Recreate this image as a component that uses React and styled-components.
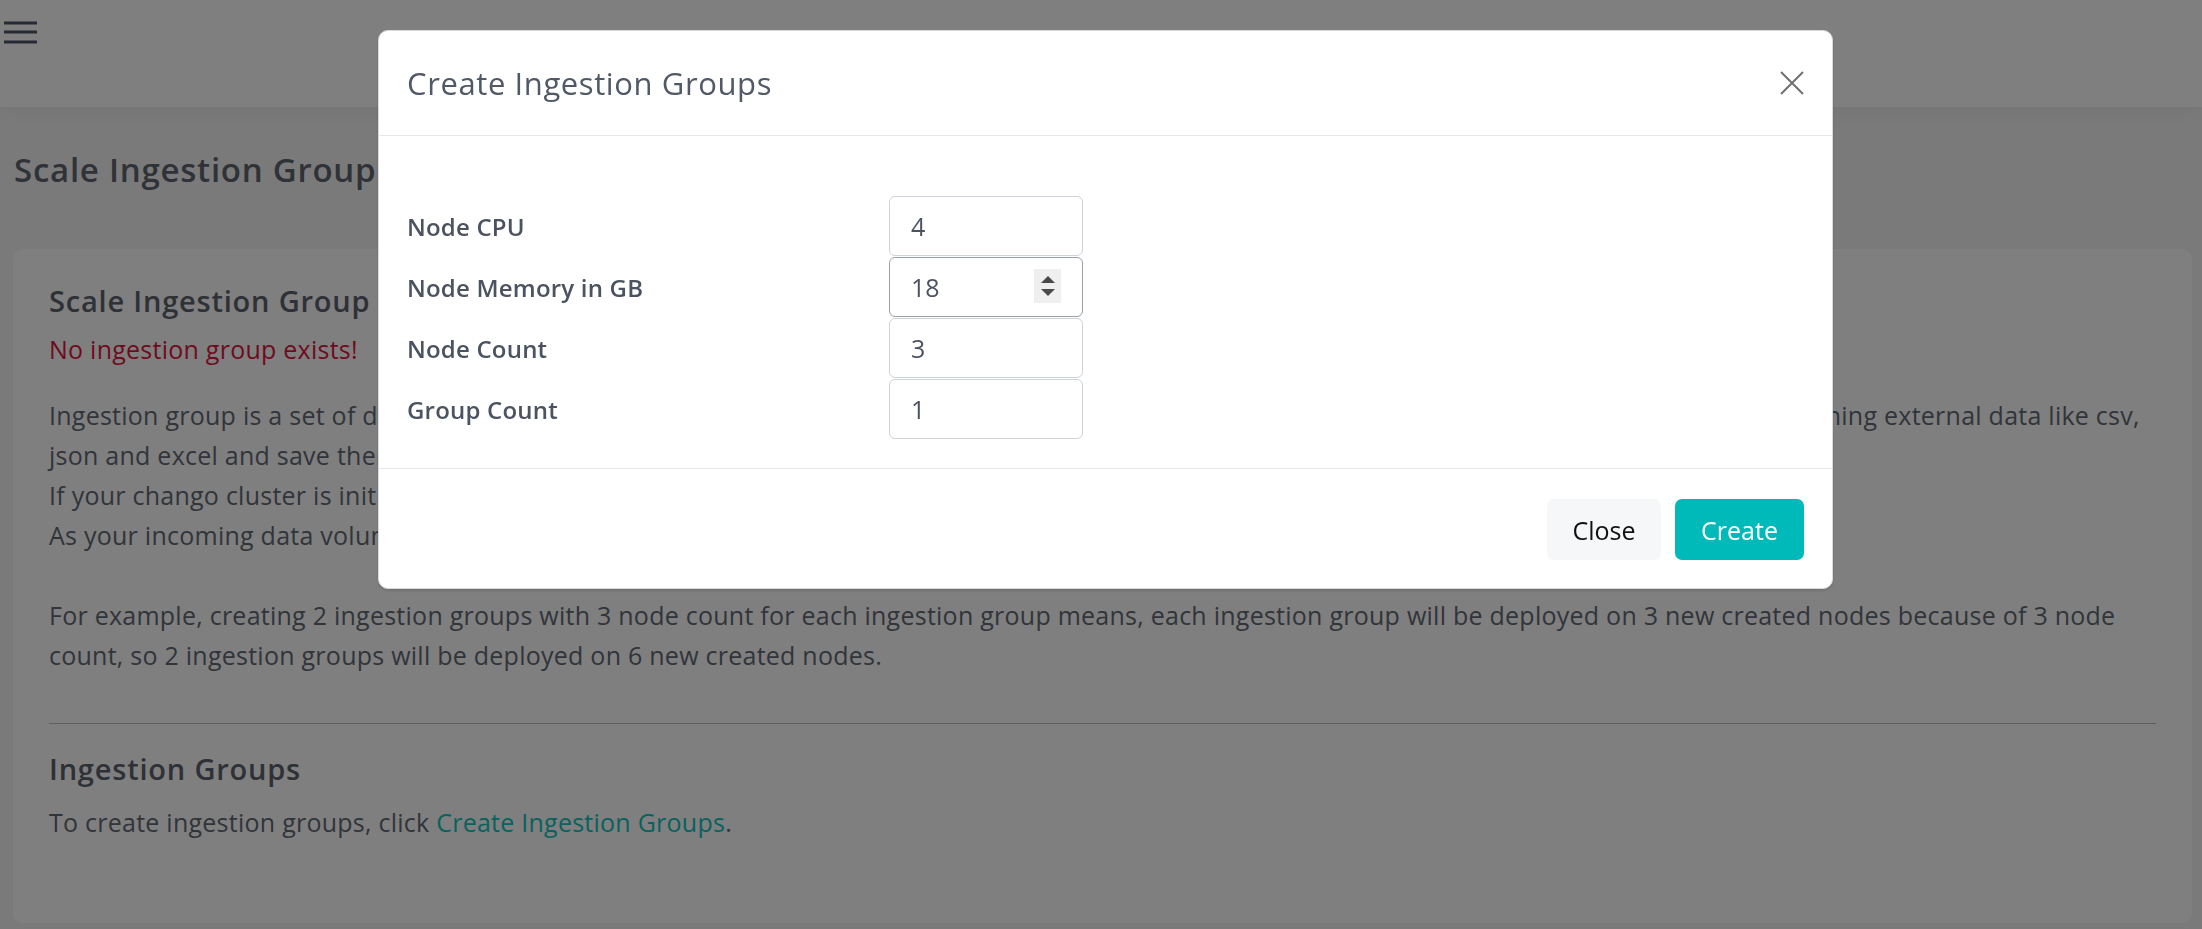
import React from 'react';
import styled, { createGlobalStyle } from 'styled-components';

const GlobalStyle = createGlobalStyle`
  html, body {
    margin: 0;
    padding: 0;
  }
  body {
    font-family: "Open Sans", "Liberation Sans", sans-serif;
    font-size: 25px;
    letter-spacing: 0.25px;
    color: #636a75;
    background: #f4f4f4;
    overflow: hidden;
  }
  * {
    box-sizing: border-box;
  }
`;

const Page = styled.div`
  min-height: 929px;
  background: #f4f4f4;
`;

const TopBar = styled.header`
  height: 107px;
  background: #ffffff;
  box-shadow: 0 4px 16px rgba(0, 0, 0, 0.04);
  padding: 20px 0 0 4px;
`;

const MenuButton = styled.button`
  border: 0;
  padding: 0;
  background: transparent;
  display: flex;
  width: 34px;
  height: 24px;
  color: #4d5566;
`;

const Main = styled.main`
  padding: 43px 10px 0 13px;
`;

const PageTitle = styled.h4`
  margin: 0 0 59px 1px;
  font-size: 33px;
  letter-spacing: 0.75px;
  line-height: 1.2;
  font-weight: 600;
  color: #5e646e;
`;

const Card = styled.section`
  background: #ffffff;
  border-radius: 10px;
  padding: 35px 36px 81px;
`;

const CardTitle = styled.h5`
  margin: 0 0 ${(p) => p.$gap}px;
  font-size: 29px;
  letter-spacing: 0.8px;
  line-height: 1.2;
  font-weight: 600;
  color: #5c626c;
`;

const Text = styled.p`
  margin: 0 0 ${(p) => p.$gap || 0}px;
  line-height: 40px;
  color: ${(p) => (p.$danger ? '#e0173f' : '#636a75')};
`;

const Line = styled.span`
  white-space: nowrap;
`;

const Divider = styled.hr`
  margin: 48px 0 28px;
  border: 0;
  border-top: 1px solid #bdbdbd;
`;

const Link = styled.a`
  color: #10c4bc;
  text-decoration: none;
`;

const Backdrop = styled.div`
  position: fixed;
  inset: 0;
  background: rgba(0, 0, 0, 0.5);
  display: flex;
  align-items: flex-start;
  padding: 30px 0 0 378px;
`;

const Dialog = styled.div`
  width: 1455px;
  background: #ffffff;
  border: 1px solid #d6d9de;
  border-radius: 10px;
  box-shadow: 0 2px 3px rgba(0, 0, 0, 0.12);
  display: flex;
  flex-direction: column;
  color: #4b5360;
  letter-spacing: 0;
`;

const DialogHeader = styled.div`
  height: 105px;
  border-bottom: 1px solid #e6e8eb;
  display: flex;
  align-items: center;
  justify-content: space-between;
  padding: 0 28px;
`;

const DialogTitle = styled.h5`
  margin: 0;
  font-size: 31px;
  letter-spacing: 0.6px;
  font-weight: 500;
  color: #515966;
`;

const CloseIcon = styled.button`
  border: 0;
  padding: 0;
  background: transparent;
  width: 24px;
  height: 24px;
  display: flex;
  color: #707070;
`;

const DialogBody = styled.div`
  padding: 60px 28px 29px;
  border-bottom: 1px solid #e6e8eb;
`;

const FormGrid = styled.div`
  display: grid;
  grid-template-columns: 482px 194px;
  grid-auto-rows: 60px;
  row-gap: 1px;
  align-items: center;
`;

const Label = styled.label`
  font-size: 24px;
  letter-spacing: 0.2px;
  font-weight: 600;
  color: #4b5360;
`;

const Field = styled.div`
  position: relative;
  height: 60px;
`;

const Input = styled.input`
  width: 100%;
  height: 60px;
  border: 1px solid ${(p) => (p.$active ? '#9aa0a7' : '#ced3d9')};
  border-radius: 6px;
  padding: 0 21px;
  font-family: inherit;
  font-size: 25px;
  color: #4b5360;
  background: #ffffff;
  outline: none;
`;

const Spinner = styled.span`
  position: absolute;
  right: 22px;
  top: 12px;
  width: 27px;
  height: 34px;
  background: #efefef;
  display: flex;
  flex-direction: column;
  align-items: center;
  justify-content: center;
  gap: 6px;
`;

const DialogFooter = styled.div`
  display: flex;
  justify-content: flex-end;
  gap: 14px;
  padding: 30px 28px 28px;
`;

const Button = styled.button`
  height: 61px;
  min-width: ${(p) => p.$w}px;
  border: 0;
  border-radius: 7px;
  padding: 0 24px;
  font-family: inherit;
  font-size: 25px;
  background: ${(p) => (p.$primary ? '#00b9b9' : '#f6f7f9')};
  color: ${(p) => (p.$primary ? '#ffffff' : '#111111')};
`;

const fields = [
  { label: 'Node CPU', value: '4' },
  { label: 'Node Memory in GB', value: '18', active: true },
  { label: 'Node Count', value: '3' },
  { label: 'Group Count', value: '1' },
];

export default function App() {
  return (
    <>
      <GlobalStyle />
      <Page>
        <TopBar>
          <MenuButton aria-label="menu">
            <svg width="34" height="24" viewBox="0 0 34 24">
              <rect x="0" y="1.5" width="33" height="3" fill="currentColor" />
              <rect x="0" y="10.5" width="33" height="3" fill="currentColor" />
              <rect x="0" y="20.5" width="33" height="3" fill="currentColor" />
            </svg>
          </MenuButton>
        </TopBar>
        <Main>
          <PageTitle>Scale Ingestion Group</PageTitle>
          <Card>
            <CardTitle $gap={11}>Scale Ingestion Group</CardTitle>
            <Text $danger $gap={26}>No ingestion group exists!</Text>
            <Text>
              <Line>
                Ingestion group is a set of data ingestion services like chango data api and chango streaming which are responsible for receiving stream data and cleaning external data like csv,
              </Line>
              <br />
              json and excel and save them into chango iceberg tables.
              <br />
              If your chango cluster is initially created, there is no ingestion group in your cluster.
              <br />
              As your incoming data volume increases, you can add more ingestion groups.
              <br />
              <br />
              For example, creating 2 ingestion groups with 3 node count for each ingestion group means, each ingestion group will be deployed on 3 new created nodes because of 3 node count, so 2 ingestion groups will be deployed on 6 new created nodes.
            </Text>
            <Divider />
            <CardTitle $gap={15}>Ingestion Groups</CardTitle>
            <Text>
              To create ingestion groups, click <Link href="#">Create Ingestion Groups</Link>.
            </Text>
          </Card>
        </Main>
      </Page>

      <Backdrop>
        <Dialog>
          <DialogHeader>
            <DialogTitle>Create Ingestion Groups</DialogTitle>
            <CloseIcon aria-label="close">
              <svg width="24" height="24" viewBox="0 0 24 24">
                <path d="M1 1 L23 23 M23 1 L1 23" stroke="currentColor" strokeWidth="2" />
              </svg>
            </CloseIcon>
          </DialogHeader>
          <DialogBody>
            <FormGrid>
              {fields.map((f) => (
                <React.Fragment key={f.label}>
                  <Label>{f.label}</Label>
                  <Field>
                    <Input defaultValue={f.value} $active={f.active} readOnly />
                    {f.active && (
                      <Spinner>
                        <svg width="14" height="7" viewBox="0 0 14 7">
                          <path d="M7 0 L14 7 L0 7 Z" fill="#4a4a4a" />
                        </svg>
                        <svg width="14" height="7" viewBox="0 0 14 7">
                          <path d="M0 0 L14 0 L7 7 Z" fill="#4a4a4a" />
                        </svg>
                      </Spinner>
                    )}
                  </Field>
                </React.Fragment>
              ))}
            </FormGrid>
          </DialogBody>
          <DialogFooter>
            <Button $w={114}>Close</Button>
            <Button $w={129} $primary>Create</Button>
          </DialogFooter>
        </Dialog>
      </Backdrop>
    </>
  );
}
